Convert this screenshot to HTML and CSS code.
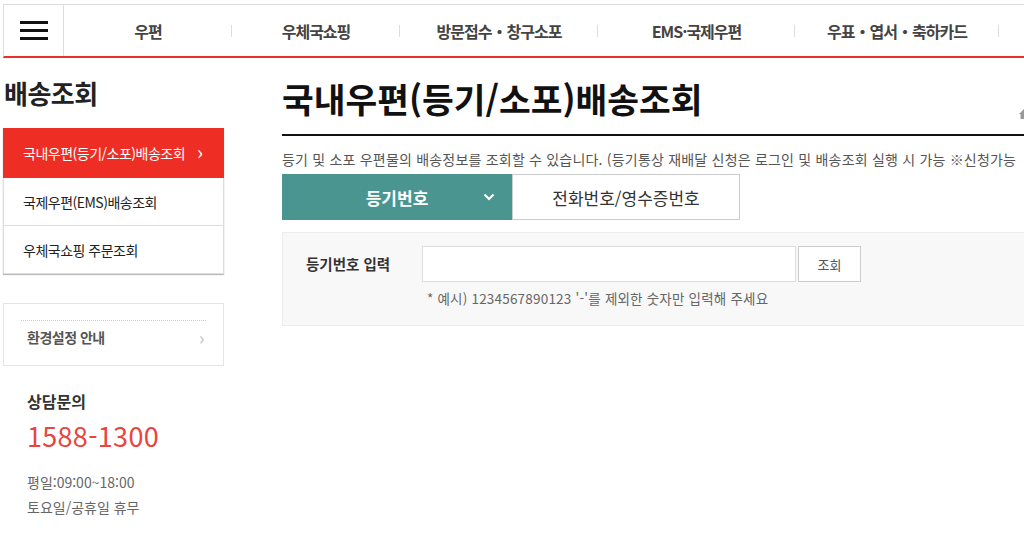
FILE: index.html
```html
<!DOCTYPE html>
<html lang="ko">
<head>
    <meta charset="UTF-8">
    <title>국내우편(등기/소포)배송조회</title>
    <link rel="stylesheet" href="styles.css">
</head>
<body>
<div class="Page">
    <header class="TopNav">
        <a class="MenuButton" href="#" aria-label="전체메뉴">
            <span></span><span></span><span></span>
        </a>
        <nav class="NavList">
            <a class="NavItem NavItem1" href="#">우편</a>
            <a class="NavItem NavItem2" href="#">우체국쇼핑</a>
            <a class="NavItem NavItem3" href="#">방문접수・창구소포</a>
            <a class="NavItem NavItem4" href="#">EMS·국제우편</a>
            <a class="NavItem NavItem5" href="#">우표・엽서・축하카드</a>
        </nav>
    </header>

    <div class="Content">
        <aside class="SideBar">
            <h2 class="SideTitle">배송조회</h2>
            <ul class="SideMenu">
                <li class="Active"><a href="#">국내우편(등기/소포)배송조회 <span class="Chevron">&#8250;</span></a></li>
                <li><a href="#">국제우편(EMS)배송조회</a></li>
                <li><a href="#">우체국쇼핑 주문조회</a></li>
            </ul>
            <div class="SettingBox">
                <a href="#">환경설정 안내 <span class="Chevron">&#8250;</span></a>
            </div>
            <div class="CallCenter">
                <h3>상담문의</h3>
                <p class="Phone">1588-1300</p>
                <p class="Hours">평일:09:00~18:00</p>
                <p class="Hours">토요일/공휴일 휴무</p>
            </div>
        </aside>

        <main class="MainArea">
            <div class="TitleRow">
                <h1>국내우편(등기/소포)배송조회</h1>
                <svg class="HomeIcon" width="12" height="12" viewBox="0 0 12 12">
                    <path d="M6 1 L11 6 L9.5 6 L9.5 11 L2.5 11 L2.5 6 L1 6 Z" fill="#999"/>
                </svg>
            </div>
            <p class="Description">등기 및 소포 우편물의 배송정보를 조회할 수 있습니다. (등기통상 재배달 신청은 로그인 및 배송조회 실행 시 가능 ※신청가능</p>

            <div class="Tabs">
                <a class="Tab TabActive" href="#">등기번호
                    <svg class="TabArrow" width="12" height="8" viewBox="0 0 12 8">
                        <path d="M1.5 1.5 L6 6 L10.5 1.5" fill="none" stroke="#fff" stroke-width="2.2"/>
                    </svg>
                </a>
                <a class="Tab" href="#">전화번호/영수증번호</a>
            </div>

            <form class="SearchBox" onsubmit="return false;">
                <label for="regiNo">등기번호 입력</label>
                <div class="SearchField">
                    <div class="SearchRow">
                        <input id="regiNo" type="text">
                        <button type="submit">조회</button>
                    </div>
                    <p class="Hint">* 예시) 1234567890123 '-'를 제외한 숫자만 입력해 주세요</p>
                </div>
            </form>
        </main>
    </div>
</div>
</body>
</html>
```

FILE: styles.css
```css
body {
    margin: 0;
    font-family: "Noto Sans CJK KR", "Noto Sans", sans-serif;
    color: #333;
    background: #fff;
    overflow: hidden;
}

a {
    text-decoration: none;
    color: inherit;
}

ul, p, h1, h2, h3 {
    margin: 0;
    padding: 0;
}

.Page {
    width: 1200px;
    padding-left: 3px;
}

/* top navigation */
.TopNav {
    display: flex;
    margin-top: 4px;
    height: 51px;
    border-top: 1px solid #dcdcdc;
    border-left: 1px solid #dcdcdc;
    border-bottom: 2px solid #e8302a;
}

.TopNav .MenuButton {
    width: 59px;
    border-right: 1px solid #dcdcdc;
    display: flex;
    flex-direction: column;
    justify-content: center;
    align-items: center;
    gap: 5px;
}

.TopNav .MenuButton span {
    display: block;
    width: 28px;
    height: 3px;
    background: #111;
}

.NavList {
    display: flex;
    align-items: center;
}

.NavItem {
    position: relative;
    text-align: center;
    font-size: 16px;
    font-weight: 700;
    color: #444;
    letter-spacing: -1px;
}

.NavItem:after {
    content: "";
    position: absolute;
    right: 0;
    top: 6px;
    height: 12px;
    border-right: 1px solid #ddd;
}

.NavItem1 { width: 168px; }
.NavItem2 { width: 168px; }
.NavItem3 { width: 198px; }
.NavItem4 { width: 197px; }
.NavItem5 { width: 204px; }

/* layout */
.Content {
    display: flex;
    gap: 58px;
}

/* sidebar */
.SideBar {
    width: 221px;
    flex-shrink: 0;
}

.SideTitle {
    font-size: 26px;
    font-weight: 700;
    color: #222;
    letter-spacing: -0.5px;
    padding: 16px 0 0 1px;
    height: 54px;
}

.SideMenu {
    list-style: none;
    border-left: 1px solid #ddd;
    border-right: 1px solid #ddd;
    box-shadow: 0 1px 1px #bbb;
}

.SideMenu li {
    border-bottom: 1px solid #ddd;
}

.SideMenu li a {
    display: flex;
    align-items: center;
    height: 47px;
    padding-left: 19px;
    font-size: 14px;
    color: #222;
    letter-spacing: -0.5px;
}

.SideMenu li.Active {
    margin: 0 -1px;
    border-bottom: none;
}

.SideMenu li.Active a {
    height: 50px;
    padding-left: 20px;
    background: #ee2e24;
    color: #fff;
}

.SideMenu .Chevron {
    margin-left: 12px;
    font-size: 20px;
    line-height: 1;
    padding-bottom: 3px;
}

.SettingBox {
    margin-top: 29px;
    height: 61px;
    border: 1px solid #e4e4e4;
    padding: 0 17px;
}

.SettingBox a {
    display: flex;
    justify-content: space-between;
    align-items: center;
    height: 32px;
    margin-top: 16px;
    padding-left: 6px;
    border-top: 1px dotted #ccc;
    font-size: 14px;
    font-weight: 700;
    color: #555;
    letter-spacing: -0.5px;
}

.SettingBox .Chevron {
    color: #bbb;
    font-size: 18px;
    font-weight: 400;
    padding-right: 2px;
}

.CallCenter {
    padding: 23px 0 0 24px;
}

.CallCenter h3 {
    font-size: 16px;
    font-weight: 700;
    color: #333;
}

.CallCenter .Phone {
    font-size: 27px;
    color: #e9443d;
    margin-top: 3px;
    letter-spacing: 0.3px;
}

.CallCenter .Hours {
    font-size: 14px;
    color: #666;
    line-height: 25px;
}

.CallCenter .Phone + .Hours {
    margin-top: 15px;
}

/* main */
.MainArea {
    flex: 1;
    min-width: 0;
}

.TitleRow {
    display: flex;
    align-items: flex-end;
    justify-content: space-between;
    width: 742px;
    height: 76px;
    border-bottom: 2px solid #111;
}

.TitleRow h1 {
    font-size: 34.5px;
    font-weight: 700;
    color: #111;
    line-height: 1;
    padding-bottom: 19px;
}

.HomeIcon {
    margin-bottom: 14px;
    margin-right: -6px;
}

.Description {
    margin-top: 13px;
    font-size: 14px;
    color: #555;
    white-space: nowrap;
    letter-spacing: 0.2px;
}

.Tabs {
    display: flex;
    margin-top: 5px;
}

.Tab {
    width: 226px;
    height: 44px;
    display: flex;
    align-items: center;
    justify-content: center;
    border: 1px solid #ccc;
    font-size: 17px;
    color: #333;
}

.Tab.TabActive {
    position: relative;
    width: 230px;
    height: 46px;
    border: none;
    background: #4a9590;
    color: #fff;
    font-weight: 700;
    font-size: 17px;
}

.TabArrow {
    position: absolute;
    right: 17px;
    top: 19px;
}

.SearchBox {
    display: flex;
    margin-top: 12px;
    width: 760px;
    height: 92px;
    background: #f8f8f8;
    border: 1px solid #ececec;
}

.SearchBox label {
    width: 116px;
    padding: 20px 0 0 23px;
    font-size: 14.5px;
    font-weight: 700;
    color: #333;
}

.SearchField {
    padding-top: 13px;
}

.SearchRow {
    display: flex;
    gap: 2px;
}

.SearchRow input {
    box-sizing: border-box;
    width: 374px;
    height: 36px;
    border: 1px solid #ddd;
    background: #fff;
    padding: 0;
}

.SearchRow button {
    width: 63px;
    height: 36px;
    border: 1px solid #ccc;
    background: #fff;
    font-family: inherit;
    font-size: 13px;
    color: #555;
}

.Hint {
    margin-top: 6px;
    padding-left: 5px;
    font-size: 13.5px;
    color: #666;
    letter-spacing: 0.2px;
}
```
